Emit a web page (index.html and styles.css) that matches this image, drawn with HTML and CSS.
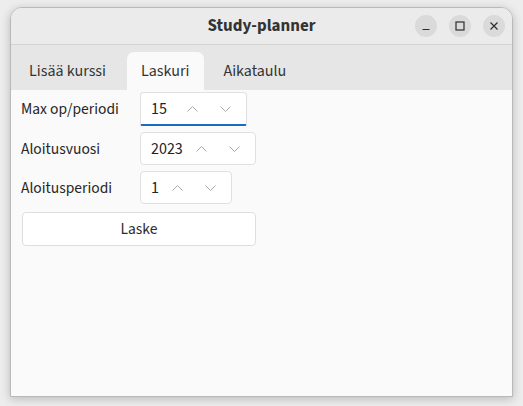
FILE: index.html
```html
<!DOCTYPE html>
<html>
<head>
<meta charset="utf-8">
<link rel="stylesheet" href="styles.css">
</head>
<body>
<div class="window">
  <div class="titlebar">
    <div class="title">Study-planner</div>
    <div class="controls">
      <span class="ctl"><svg width="10" height="10" viewBox="0 0 10 10"><path d="M1.5 8.5h7" stroke="#2e2e2e" stroke-width="1.2" fill="none"/></svg></span>
      <span class="ctl"><svg width="10" height="10" viewBox="0 0 10 10"><rect x="1" y="1" width="8" height="8" stroke="#2e2e2e" stroke-width="1.2" fill="none"/></svg></span>
      <span class="ctl"><svg width="10" height="10" viewBox="0 0 10 10"><path d="M1.5 1.5l7 7M8.5 1.5l-7 7" stroke="#2e2e2e" stroke-width="1.2" fill="none"/></svg></span>
    </div>
  </div>
  <div class="tabs">
    <div class="tab">Lisää kurssi</div>
    <div class="tab active">Laskuri</div>
    <div class="tab">Aikataulu</div>
  </div>
  <div class="content">
    <div class="form">
      <label class="lbl">Max op/periodi</label>
      <div class="spin focused"><span class="num wide">15</span><span class="arrows"><svg width="11" height="6" viewBox="0 0 11 6"><path d="M0.5 5.5l5-5 5 5" stroke="#a8a8a8" stroke-width="1" fill="none"/></svg><svg width="11" height="6" viewBox="0 0 11 6"><path d="M0.5 0.5l5 5 5-5" stroke="#a8a8a8" stroke-width="1" fill="none"/></svg></span></div>
      <label class="lbl">Aloitusvuosi</label>
      <div class="spin"><span class="num">2023</span><span class="arrows"><svg width="11" height="6" viewBox="0 0 11 6"><path d="M0.5 5.5l5-5 5 5" stroke="#a8a8a8" stroke-width="1" fill="none"/></svg><svg width="11" height="6" viewBox="0 0 11 6"><path d="M0.5 0.5l5 5 5-5" stroke="#a8a8a8" stroke-width="1" fill="none"/></svg></span></div>
      <label class="lbl">Aloitusperiodi</label>
      <div class="spin"><span class="num">1</span><span class="arrows"><svg width="11" height="6" viewBox="0 0 11 6"><path d="M0.5 5.5l5-5 5 5" stroke="#a8a8a8" stroke-width="1" fill="none"/></svg><svg width="11" height="6" viewBox="0 0 11 6"><path d="M0.5 0.5l5 5 5-5" stroke="#a8a8a8" stroke-width="1" fill="none"/></svg></span></div>
      <button class="btn">Laske</button>
    </div>
  </div>
</div>
</body>
</html>
```
FILE: styles.css
```css
html, body {
  margin: 0;
  padding: 0;
}
body {
  width: 523px;
  height: 406px;
  background: #ededed;
  font-family: "Source Sans 3", "Lato", "Noto Sans", sans-serif;
  color: #2c2c2c;
  overflow: hidden;
}
.window {
  margin: 7px 0 0 10px;
  width: 501px;
  height: 388px;
  border: 1px solid #b9b9b9;
  border-radius: 12px 12px 0 0;
  background: #fafafa;
  box-shadow: 0 2px 10px rgba(0,0,0,0.22);
  display: flex;
  flex-direction: column;
  overflow: hidden;
}
.titlebar {
  height: 36px;
  flex: none;
  background: #ebebeb;
  border-bottom: 1px solid #d3d3d3;
  display: flex;
  align-items: center;
  justify-content: center;
  position: relative;
}
.title {
  font-weight: bold;
  font-size: 17px;
  color: #333;
}
.controls {
  position: absolute;
  right: 7px;
  top: 7px;
  display: flex;
  gap: 12px;
}
.ctl {
  width: 22px;
  height: 22px;
  border-radius: 50%;
  background: #dadada;
  display: flex;
  align-items: center;
  justify-content: center;
}
.tabs {
  height: 45px;
  flex: none;
  background: #e6e6e6;
  display: flex;
  align-items: flex-end;
  padding-left: 4px;
}
.tab {
  height: 38px;
  display: flex;
  align-items: center;
  font-size: 16px;
  color: #333;
}
.tab:first-child {
  padding: 0 21px 0 14px;
}
.tab.active {
  background: #fafafa;
  border-radius: 7px 7px 0 0;
  padding: 0 15px 0 14px;
  margin-right: 5px;
}
.tab:last-child {
  padding: 0 14px;
}
.content {
  flex: 1;
  background: #fafafa;
  padding: 2px 0 0 10px;
}
.form {
  display: grid;
  grid-template-columns: 119px auto;
  row-gap: 6px;
  justify-items: start;
  align-items: center;
  width: 234px;
}
.lbl {
  font-size: 15.5px;
  color: #262626;
}
.spin {
  background: #fff;
  border: 1px solid #e0e0e0;
  border-radius: 4px;
  display: flex;
  align-items: center;
  padding: 0 15px 0 10px;
  box-sizing: border-box;
  height: 33px;
}
.spin.focused {
  height: 34px;
  border-bottom: 2px solid #1c6bc2;
  border-radius: 4px 4px 2px 2px;
}
.num {
  font-size: 16px;
  color: #222;
  margin-right: 13px;
}
.num.wide {
  margin-right: 20px;
}
.arrows {
  display: flex;
  gap: 22px;
}
.btn {
  grid-column: 1 / span 2;
  margin-top: 2px;
  margin-left: 1px;
  justify-self: stretch;
  height: 34px;
  background: #fff;
  border: 1px solid #dedede;
  border-radius: 4px;
  font-family: inherit;
  font-size: 15.5px;
  color: #2c2c2c;
}
```
